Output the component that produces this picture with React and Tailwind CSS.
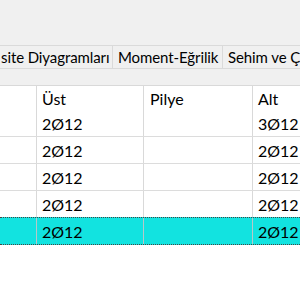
export default function App() {
  const font = { fontFamily: 'Lato, "Noto Sans", sans-serif' };
  const rows = [
    { ust: "2Ø12", alt: "3Ø12" },
    { ust: "2Ø12", alt: "2Ø12" },
    { ust: "2Ø12", alt: "2Ø12" },
    { ust: "2Ø12", alt: "2Ø12" },
  ];
  return (
    <div className="w-[300px] h-[300px] overflow-hidden bg-white text-[16px] text-black" style={font}>
      <div className="h-[45px] bg-[#f0f0f0]" />
      <div className="h-[24px] flex bg-[#f0f0f0] border-t border-b border-[#dadada] overflow-hidden whitespace-nowrap text-[15px] tracking-[-0.1px]">
        <div className="w-[113px] shrink-0 border-r border-[#dadada] flex items-center overflow-hidden pl-[1px]">
          <span className="leading-none">site Diyagramları</span>
        </div>
        <div className="w-[110px] shrink-0 border-r border-[#dadada] flex items-center pl-[5px] overflow-hidden">
          <span className="leading-none">Moment-Eğrilik</span>
        </div>
        <div className="shrink-0 flex items-center pl-[5px]">
          <span className="leading-none">Sehim ve Çatlak</span>
        </div>
      </div>
      <div className="h-[16px] bg-[#f0f0f0]" />
      <div className="border-t border-[#d9d9d9] bg-white whitespace-nowrap">
        <div className="flex h-[24px]">
          <div className="w-[37px] shrink-0 border-r border-[#d9d9d9]" />
          <div className="w-[107px] shrink-0 border-r border-[#d9d9d9] pl-[5px] flex items-center pt-[1px]">Üst</div>
          <div className="w-[109px] shrink-0 border-r border-[#d9d9d9] pl-[6px] flex items-center pt-[1px]">Pilye</div>
          <div className="flex-1 pl-[5px] flex items-center pt-[1px]">Alt</div>
        </div>
        {rows.map((r, i) => (
          <div
            key={i}
            className={
              i === 3
                ? "flex h-[26px]"
                : "flex h-[27px] border-b border-[#dcdcdc]"
            }
          >
            <div className="w-[37px] shrink-0 border-r border-[#d9d9d9]" />
            <div className="w-[107px] shrink-0 border-r border-[#d9d9d9] pl-[5px] flex items-center pt-[2px]">{r.ust}</div>
            <div className="w-[109px] shrink-0 border-r border-[#d9d9d9]" />
            <div className="flex-1 pl-[5px] flex items-center pt-[2px]">{r.alt}</div>
          </div>
        ))}
        <div className="flex h-[28px] bg-[#12e3e0] border-y border-dotted border-[#444444]">
          <div className="w-[37px] shrink-0 border-r border-[#b8c8c8]" />
          <div className="w-[107px] shrink-0 border-r border-[#b8c8c8] pl-[5px] flex items-center pt-[2px]">2Ø12</div>
          <div className="w-[109px] shrink-0 border-r border-[#b8c8c8]" />
          <div className="flex-1 pl-[5px] flex items-center pt-[2px]">2Ø12</div>
        </div>
      </div>
    </div>
  );
}
